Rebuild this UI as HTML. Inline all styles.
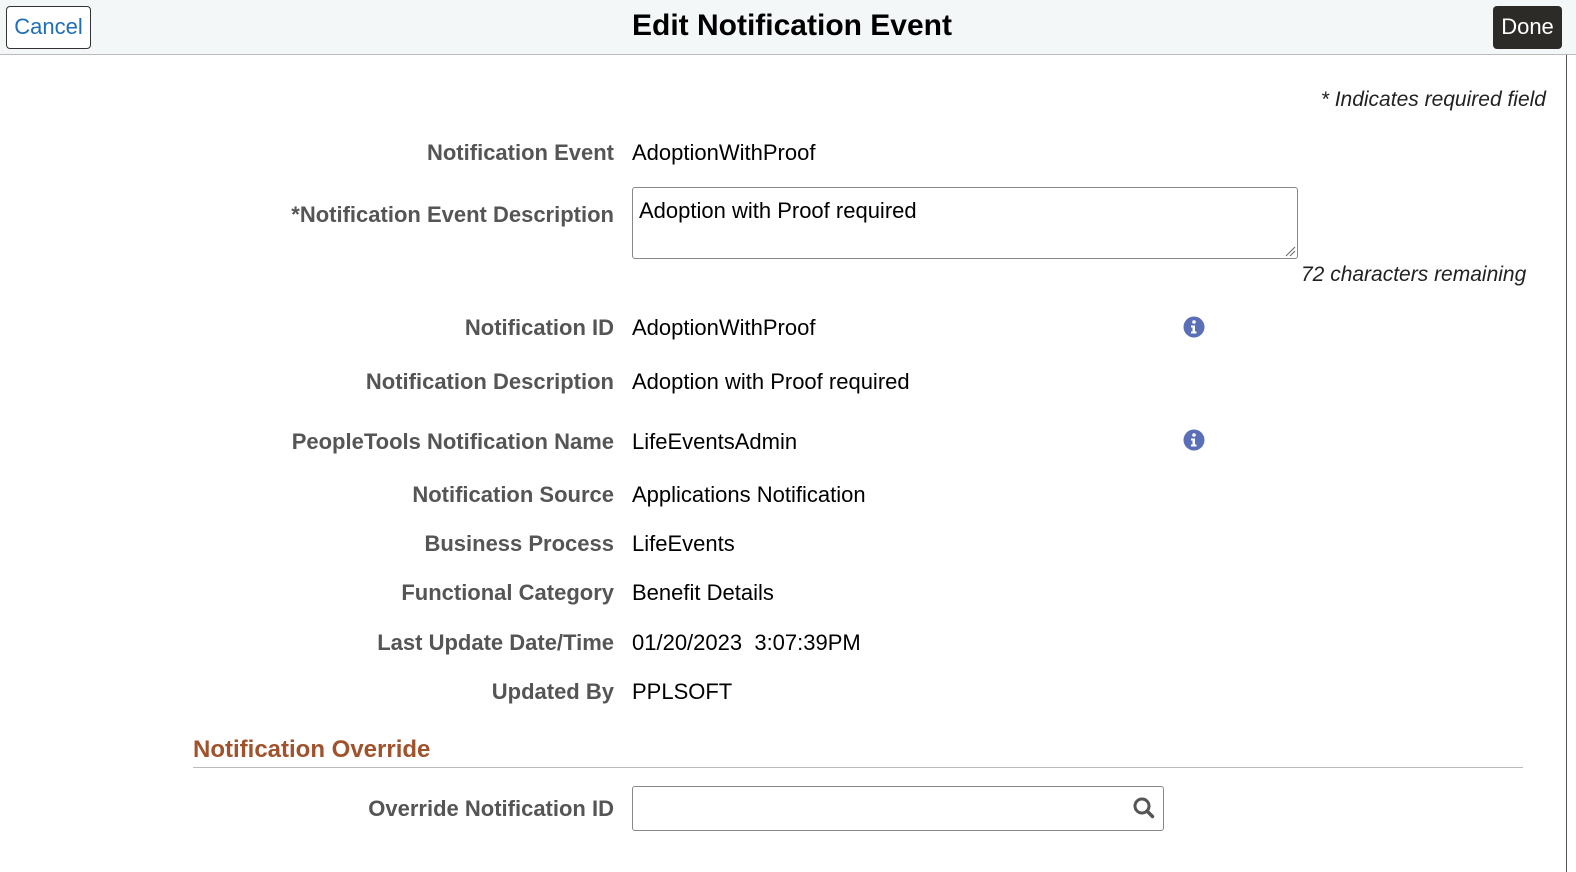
<!DOCTYPE html>
<html><head><style>
body{margin:0;width:1576px;height:872px;background:#fff;font-family:"Liberation Sans",Arial,sans-serif;position:relative;overflow:hidden}
.hdr{position:absolute;left:0;top:0;width:1576px;height:54px;background:#f4f7f8;border-bottom:1px solid #bbb}
.cancel{position:absolute;left:6px;top:6px;border:1px solid #333;border-radius:4px;background:#fff;color:#1e6fb7;font-size:22px;line-height:40px;text-align:center;box-sizing:border-box;width:85px;height:43px}
.done{position:absolute;left:1493px;top:6px;width:69px;height:43px;border-radius:4px;background:#2d2b28;color:#fff;font-size:22px;line-height:41px;text-align:center}
.title{position:absolute;left:0;width:1584px;top:9px;text-align:center;font-size:30px;font-weight:bold;color:#000}
.vline{position:absolute;left:1566px;top:55px;width:1px;height:817px;background:#555}
.lbl{position:absolute;right:962px;font-size:22px;font-weight:bold;color:#555;white-space:nowrap}
.val{position:absolute;left:632px;font-size:22px;color:#000;white-space:nowrap}
.it{position:absolute;font-size:21px;font-style:italic;color:#222}
.info{position:absolute;left:1183px;width:22px;height:22px}
</style></head><body>
<div class="hdr"><div class="cancel">Cancel</div><div class="title">Edit Notification Event</div><div class="done">Done</div></div>
<div class="vline"></div>
<div class="it" style="right:30px;top:88px">* Indicates required field</div>
<div class="lbl" style="top:140px">Notification Event</div><div class="val" style="top:140px">AdoptionWithProof</div>
<div class="lbl" style="top:202px">*Notification Event Description</div>
<div style="position:absolute;left:632px;top:187px;width:666px;height:72px;border:1px solid #888;border-radius:3px;box-sizing:border-box"></div>
<div class="val" style="left:639px;top:198px">Adoption with Proof required</div>
<svg style="position:absolute;left:1284px;top:245px" width="12" height="12"><path d="M2 11L11 2M6 11L11 6" stroke="#666" stroke-width="1"/></svg>
<div class="it" style="left:1301px;top:263px">72 characters remaining</div>
<div class="lbl" style="top:315px">Notification ID</div><div class="val" style="top:315px">AdoptionWithProof</div>
<svg class="info" style="top:316px" viewBox="0 0 22 22"><circle cx="11" cy="11" r="10.5" fill="#5b6fb8"/><circle cx="11" cy="6" r="1.8" fill="#fff"/><path d="M8 9.5h4v6h1.5v2h-5.5v-2h1.5v-4h-1.5z" fill="#fff"/></svg>
<div class="lbl" style="top:369px">Notification Description</div><div class="val" style="top:369px">Adoption with Proof required</div>
<div class="lbl" style="top:429px">PeopleTools Notification Name</div><div class="val" style="top:429px">LifeEventsAdmin</div>
<svg class="info" style="top:429px" viewBox="0 0 22 22"><circle cx="11" cy="11" r="10.5" fill="#5b6fb8"/><circle cx="11" cy="6" r="1.8" fill="#fff"/><path d="M8 9.5h4v6h1.5v2h-5.5v-2h1.5v-4h-1.5z" fill="#fff"/></svg>
<div class="lbl" style="top:482px">Notification Source</div><div class="val" style="top:482px">Applications Notification</div>
<div class="lbl" style="top:531px">Business Process</div><div class="val" style="top:531px">LifeEvents</div>
<div class="lbl" style="top:580px">Functional Category</div><div class="val" style="top:580px">Benefit Details</div>
<div class="lbl" style="top:630px">Last Update Date/Time</div><div class="val" style="top:630px">01/20/2023&nbsp; 3:07:39PM</div>
<div class="lbl" style="top:679px">Updated By</div><div class="val" style="top:679px">PPLSOFT</div>
<div style="position:absolute;left:193px;top:736px;font-size:24px;font-weight:bold;color:#a0522d">Notification Override</div>
<div style="position:absolute;left:193px;top:767px;width:1330px;height:1px;background:#bbb"></div>
<div class="lbl" style="top:796px">Override Notification ID</div>
<div style="position:absolute;left:632px;top:786px;width:532px;height:45px;border:1px solid #888;border-radius:3px;box-sizing:border-box"></div>
<svg style="position:absolute;left:1132px;top:796px" width="24" height="24" viewBox="0 0 24 24"><circle cx="10" cy="10" r="7" fill="none" stroke="#555" stroke-width="3"/><path d="M15 15l5.5 5.5" stroke="#555" stroke-width="3.5" stroke-linecap="round"/></svg>
</body></html>
